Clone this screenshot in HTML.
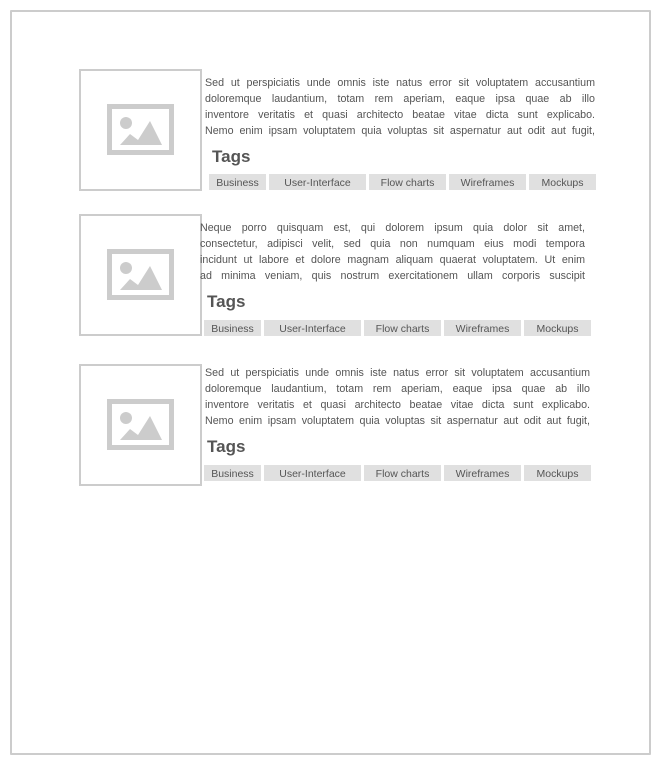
<!DOCTYPE html>
<html><head><meta charset="utf-8"><style>
*{margin:0;padding:0;box-sizing:border-box}
body{width:660px;height:765px;background:#fff;position:relative;overflow:hidden;font-family:"Liberation Sans",sans-serif;color:#555}
.frame{position:absolute;left:10px;top:10px;width:641px;height:745px;border:2px solid #ccc;border-radius:1px}
.img{position:absolute;width:123px;height:122px;border:2px solid #ccc;background:#fff}
.img svg{position:absolute;left:26px;top:33px}
.txt{position:absolute;font-size:10.7px;line-height:16px;overflow:hidden;height:64px;color:#555}
.txt div{text-align:justify;text-align-last:justify;white-space:nowrap;height:16px}
.h{position:absolute;font-size:17px;font-weight:bold;color:#555}
.tag{position:absolute;height:16px;background:#e0e0e0;font-size:10.5px;line-height:18px;text-align:center;color:#555}
</style></head><body>
<div class="frame"></div>

<div class="img" style="left:79px;top:69px"><svg width="67" height="51" viewBox="0 0 67 51"><rect x="2.5" y="2.5" width="62" height="46" fill="none" stroke="#ccc" stroke-width="5"/><circle cx="19" cy="19" r="6" fill="#ccc"/><path d="M13 41 L23 30 L31 36 L43 17 L55 41 Z" fill="#ccc"/></svg></div>
<div class="txt" style="left:205px;top:75px;width:390px">
<div>Sed ut perspiciatis unde omnis iste natus error sit voluptatem accusantium</div>
<div>doloremque laudantium, totam rem aperiam, eaque ipsa quae ab illo</div>
<div>inventore veritatis et quasi architecto beatae vitae dicta sunt explicabo.</div>
<div>Nemo enim ipsam voluptatem quia voluptas sit aspernatur aut odit aut fugit,</div>
</div>
<div class="h" style="left:212px;top:147px">Tags</div>
<div class="tag" style="left:209px;top:174px;width:57px">Business</div>
<div class="tag" style="left:269px;top:174px;width:97px">User-Interface</div>
<div class="tag" style="left:369px;top:174px;width:77px">Flow charts</div>
<div class="tag" style="left:449px;top:174px;width:77px">Wireframes</div>
<div class="tag" style="left:529px;top:174px;width:67px">Mockups</div>

<div class="img" style="left:79px;top:214px"><svg width="67" height="51" viewBox="0 0 67 51"><rect x="2.5" y="2.5" width="62" height="46" fill="none" stroke="#ccc" stroke-width="5"/><circle cx="19" cy="19" r="6" fill="#ccc"/><path d="M13 41 L23 30 L31 36 L43 17 L55 41 Z" fill="#ccc"/></svg></div>
<div class="txt" style="left:200px;top:220px;width:385px;height:62px">
<div>Neque porro quisquam est, qui dolorem ipsum quia dolor sit amet,</div>
<div>consectetur, adipisci velit, sed quia non numquam eius modi tempora</div>
<div>incidunt ut labore et dolore magnam aliquam quaerat voluptatem. Ut enim</div>
<div>ad minima veniam, quis nostrum exercitationem ullam corporis suscipit</div>
</div>
<div class="h" style="left:207px;top:292px">Tags</div>
<div class="tag" style="left:204px;top:320px;width:57px">Business</div>
<div class="tag" style="left:264px;top:320px;width:97px">User-Interface</div>
<div class="tag" style="left:364px;top:320px;width:77px">Flow charts</div>
<div class="tag" style="left:444px;top:320px;width:77px">Wireframes</div>
<div class="tag" style="left:524px;top:320px;width:67px">Mockups</div>

<div class="img" style="left:79px;top:364px"><svg width="67" height="51" viewBox="0 0 67 51"><rect x="2.5" y="2.5" width="62" height="46" fill="none" stroke="#ccc" stroke-width="5"/><circle cx="19" cy="19" r="6" fill="#ccc"/><path d="M13 41 L23 30 L31 36 L43 17 L55 41 Z" fill="#ccc"/></svg></div>
<div class="txt" style="left:205px;top:365px;width:385px">
<div>Sed ut perspiciatis unde omnis iste natus error sit voluptatem accusantium</div>
<div>doloremque laudantium, totam rem aperiam, eaque ipsa quae ab illo</div>
<div>inventore veritatis et quasi architecto beatae vitae dicta sunt explicabo.</div>
<div>Nemo enim ipsam voluptatem quia voluptas sit aspernatur aut odit aut fugit,</div>
</div>
<div class="h" style="left:207px;top:437px">Tags</div>
<div class="tag" style="left:204px;top:465px;width:57px">Business</div>
<div class="tag" style="left:264px;top:465px;width:97px">User-Interface</div>
<div class="tag" style="left:364px;top:465px;width:77px">Flow charts</div>
<div class="tag" style="left:444px;top:465px;width:77px">Wireframes</div>
<div class="tag" style="left:524px;top:465px;width:67px">Mockups</div>
</body></html>
